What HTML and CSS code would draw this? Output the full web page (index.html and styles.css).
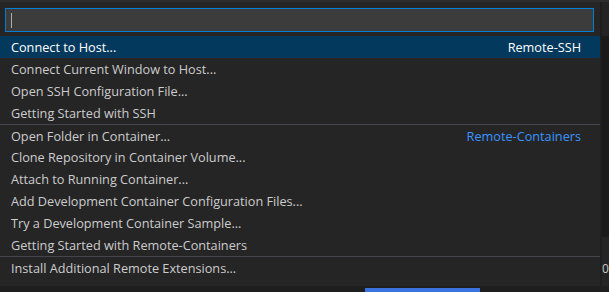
FILE: index.html
```html
<!DOCTYPE html>
<html lang="en">
<head>
    <meta charset="UTF-8">
    <meta name="viewport" content="width=device-width, initial-scale=1.0">
    <title>Remote Commands</title>
    <link rel="stylesheet" href="styles.css">
</head>
<body>
    <div class="workbench">
        <div class="palette">
            <div class="input-wrap">
                <div class="quick-input"><span class="caret"></span></div>
            </div>
            <ul class="pick-list">
                <li class="pick selected"><span>Connect to Host...</span><span class="group">Remote-SSH</span></li>
                <li class="pick"><span>Connect Current Window to Host...</span></li>
                <li class="pick"><span>Open SSH Configuration File...</span></li>
                <li class="pick"><span>Getting Started with SSH</span></li>
                <li class="pick sep"><span>Open Folder in Container...</span><span class="group link">Remote-Containers</span></li>
                <li class="pick"><span>Clone Repository in Container Volume...</span></li>
                <li class="pick"><span>Attach to Running Container...</span></li>
                <li class="pick"><span>Add Development Container Configuration Files...</span></li>
                <li class="pick"><span>Try a Development Container Sample...</span></li>
                <li class="pick"><span>Getting Started with Remote-Containers</span></li>
                <li class="pick sep"><span>Install Additional Remote Extensions...</span></li>
            </ul>
        </div>
        <div class="side-strip"><div class="scroll-shadow"></div></div>
        <span class="behind">0</span>
        <div class="status-bar"><div class="status-item"></div></div>
    </div>
</body>
</html>
```
FILE: styles.css
```css
body {
    margin: 0;
    background-color: #1e1e1e;
    font-family: 'Open Sans', 'Noto Sans', sans-serif;
    font-size: 12.7px;
    color: #cccccc;
}
.workbench {
    position: relative;
    width: 609px;
    height: 292px;
    overflow: hidden;
    display: grid;
    grid-template-columns: 600px 9px;
    grid-template-rows: 284px 6px;
    border-top: 2px solid #2d2d2d;
    box-sizing: border-box;
}
.palette {
    background-color: #252526;
    padding-bottom: 8px;
}
.input-wrap {
    padding: 6px 6px 4px 5px;
}
.quick-input {
    height: 24px;
    box-sizing: border-box;
    background-color: #3c3c3c;
    border: 1px solid #007fd4;
    display: flex;
    align-items: center;
    padding-left: 5px;
}
.caret {
    width: 1px;
    height: 15px;
    background-color: #aeafad;
}
.pick-list {
    list-style: none;
    margin: 0;
    padding: 0;
}
.pick {
    height: 22px;
    display: flex;
    align-items: center;
    justify-content: space-between;
    padding: 0 19px 0 11px;
    box-sizing: border-box;
    white-space: nowrap;
}
.pick.sep {
    border-top: 1px solid #45454d;
}
.pick.selected {
    background-color: #04395e;
    color: #ffffff;
}
.group {
    color: #cccccc;
}
.pick.selected .group {
    color: #ffffff;
}
.group.link {
    color: #3794ff;
}
.side-strip {
    background-color: #242424;
    border-left: 2px solid #1e1e1e;
    padding-top: 34px;
}
.scroll-shadow {
    height: 201px;
    background-color: #1a1a1a;
}
.status-bar {
    grid-column: 1 / span 2;
    background-color: #1e1e1e;
    position: relative;
}
.status-item {
    position: absolute;
    left: 365px;
    top: 2px;
    width: 115px;
    height: 4px;
    background-color: #3a72e0;
}
.behind {
    position: absolute;
    left: 602px;
    top: 258px;
    font-size: 12px;
    color: #c8c8c8;
}
```
